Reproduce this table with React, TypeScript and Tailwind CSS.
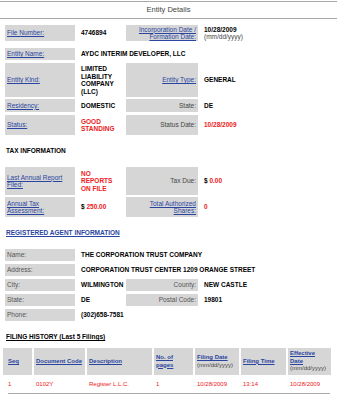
import type { ReactNode } from "react"

const font = { fontFamily: '"Liberation Sans", Arial, sans-serif' }

const lbl = "flex items-center bg-[#d6d6d6] px-[2px] leading-[7.5px]"
const val = "flex items-center px-[3px] font-bold leading-[7.5px]"
const link = "text-[#2a45a0] underline"
const red = "text-[#ee2020]"

function Row({ h, mt, children }: { h: string; mt: string; children: ReactNode }) {
  return (
    <div className={`grid grid-cols-[70px_45px_72px_1fr] gap-x-[3px] pl-[5px] ${h} ${mt}`}>
      {children}
    </div>
  )
}

const cols = [
  { w: "w-[29px]", pl: "pl-[5px]", head: <span className={link}>Seq</span>, cell: "1" },
  { w: "w-[51px]", pl: "pl-[2px]", head: <span className={link}>Document Code</span>, cell: "0102Y" },
  { w: "w-[65px]", pl: "pl-[2px]", head: <span className={link}>Description</span>, cell: "Register L.L.C." },
  {
    w: "w-[39px]",
    pl: "pl-[2px]",
    head: (
      <span className={link}>
        No. of
        <br />
        pages
      </span>
    ),
    cell: "1",
  },
  {
    w: "w-[44px]",
    pl: "pl-[2px]",
    head: (
      <span>
        <span className={link}>Filing Date</span>
        <br />
        <span className="font-normal text-[#444]">(mm/dd/yyyy)</span>
      </span>
    ),
    cell: "10/28/2009",
  },
  { w: "w-[45px]", pl: "pl-[2px]", head: <span className={link}>Filing Time</span>, cell: "13:14" },
  {
    w: "w-[43px]",
    pl: "pl-[2px]",
    head: (
      <span>
        <span className={link}>
          Effective
          <br />
          Date
        </span>
        <br />
        <span className="font-normal text-[#444]">(mm/dd/yyyy)</span>
      </span>
    ),
    cell: "10/28/2009",
  },
]

export default function App() {
  return (
    <div className="h-[400px] w-[337px] overflow-hidden bg-white text-[6.5px] text-black" style={font}>
      {/* title */}
      <div className="mt-[1px] flex h-[18px] items-center justify-center border-y border-[#a8a8a8] text-[7.5px] text-[#444]">
        Entity Details
      </div>

      {/* entity details */}
      <Row h="h-[16px]" mt="mt-[6px]">
        <div className={lbl}>
          <span className={link}>File Number:</span>
        </div>
        <div className={val}>4746894</div>
        <div className={`${lbl} justify-end text-right`}>
          <span className={link}>
            Incorporation Date /
            <br />
            Formation Date:
          </span>
        </div>
        <div className={val}>
          <span>
            10/28/2009
            <br />
            <span className="font-normal text-[#444]">(mm/dd/yyyy)</span>
          </span>
        </div>
      </Row>
      <Row h="h-[12px]" mt="mt-[7px]">
        <div className={lbl}>
          <span className={link}>Entity Name:</span>
        </div>
        <div className={`${val} col-span-3`}>AYDC INTERIM DEVELOPER, LLC</div>
      </Row>
      <Row h="h-[34px]" mt="mt-[3px]">
        <div className={lbl}>
          <span className={link}>Entity Kind:</span>
        </div>
        <div className={val}>
          <span>
            LIMITED
            <br />
            LIABILITY
            <br />
            COMPANY
            <br />
            (LLC)
          </span>
        </div>
        <div className={`${lbl} justify-end`}>
          <span className={link}>Entity Type:</span>
        </div>
        <div className={val}>GENERAL</div>
      </Row>
      <Row h="h-[13px]" mt="mt-[2px]">
        <div className={lbl}>
          <span className={link}>Residency:</span>
        </div>
        <div className={val}>DOMESTIC</div>
        <div className={`${lbl} justify-end text-[#444]`}>State:</div>
        <div className={val}>DE</div>
      </Row>
      <Row h="h-[20px]" mt="mt-[3px]">
        <div className={lbl}>
          <span className={link}>Status:</span>
        </div>
        <div className={`${val} ${red}`}>
          <span>
            GOOD
            <br />
            STANDING
          </span>
        </div>
        <div className={`${lbl} justify-end text-[#444]`}>Status Date:</div>
        <div className={`${val} ${red}`}>10/28/2009</div>
      </Row>

      {/* tax */}
      <div className="mt-[12px] pl-[6px] font-bold leading-[8px]">TAX INFORMATION</div>
      <Row h="h-[28px]" mt="mt-[12px]">
        <div className={lbl}>
          <span className={link}>
            Last Annual Report
            <br />
            Filed:
          </span>
        </div>
        <div className={`${val} ${red}`}>
          <span>
            NO
            <br />
            REPORTS
            <br />
            ON FILE
          </span>
        </div>
        <div className={`${lbl} justify-end text-[#444]`}>Tax Due:</div>
        <div className={val}>
          $&nbsp;<span className={red}>0.00</span>
        </div>
      </Row>
      <Row h="h-[20px]" mt="mt-[2px]">
        <div className={lbl}>
          <span className={link}>
            Annual Tax
            <br />
            Assessment:
          </span>
        </div>
        <div className={val}>
          $&nbsp;<span className={red}>250.00</span>
        </div>
        <div className={`${lbl} justify-end text-right`}>
          <span className={link}>
            Total Authorized
            <br />
            Shares:
          </span>
        </div>
        <div className={`${val} ${red}`}>0</div>
      </Row>

      {/* agent */}
      <div className="mt-[12px] pl-[6px] font-bold leading-[8px]">
        <span className={link}>REGISTERED AGENT INFORMATION</span>
      </div>
      <Row h="h-[12px]" mt="mt-[12px]">
        <div className={`${lbl} text-[#555]`}>Name:</div>
        <div className={`${val} col-span-3`}>THE CORPORATION TRUST COMPANY</div>
      </Row>
      <Row h="h-[12px]" mt="mt-[3px]">
        <div className={`${lbl} text-[#555]`}>Address:</div>
        <div className={`${val} col-span-3`}>CORPORATION TRUST CENTER 1209 ORANGE STREET</div>
      </Row>
      <Row h="h-[12px]" mt="mt-[3px]">
        <div className={`${lbl} text-[#555]`}>City:</div>
        <div className={val}>WILMINGTON</div>
        <div className={`${lbl} justify-end text-[#555]`}>County:</div>
        <div className={val}>NEW CASTLE</div>
      </Row>
      <Row h="h-[12px]" mt="mt-[3px]">
        <div className={`${lbl} text-[#555]`}>State:</div>
        <div className={val}>DE</div>
        <div className={`${lbl} justify-end text-[#555]`}>Postal Code:</div>
        <div className={val}>19801</div>
      </Row>
      <Row h="h-[12px]" mt="mt-[3px]">
        <div className={`${lbl} text-[#555]`}>Phone:</div>
        <div className={`${val} col-span-3`}>(302)658-7581</div>
      </Row>

      {/* filing history */}
      <div className="mt-[12px] pl-[6px] font-bold leading-[8px] underline">FILING HISTORY (Last 5 Filings)</div>
      <div className="mt-[7px] flex h-[27px] gap-x-[2px] pl-[3px] text-[6px]">
        {cols.map((c, i) => (
          <div
            key={i}
            className={`${c.w} ${c.pl} flex shrink-0 items-center whitespace-nowrap bg-[#d6d6d6] font-bold leading-[7.5px]`}
          >
            {c.head}
          </div>
        ))}
      </div>
      <div className={`flex h-[18px] gap-x-[2px] pl-[3px] text-[6px] ${red}`}>
        {cols.map((c, i) => (
          <div key={i} className={`${c.w} ${c.pl} flex shrink-0 items-center`}>
            {c.cell}
          </div>
        ))}
      </div>
      <div className="ml-[8px] w-[322px] border-t border-[#a8a8a8]" />
    </div>
  )
}
